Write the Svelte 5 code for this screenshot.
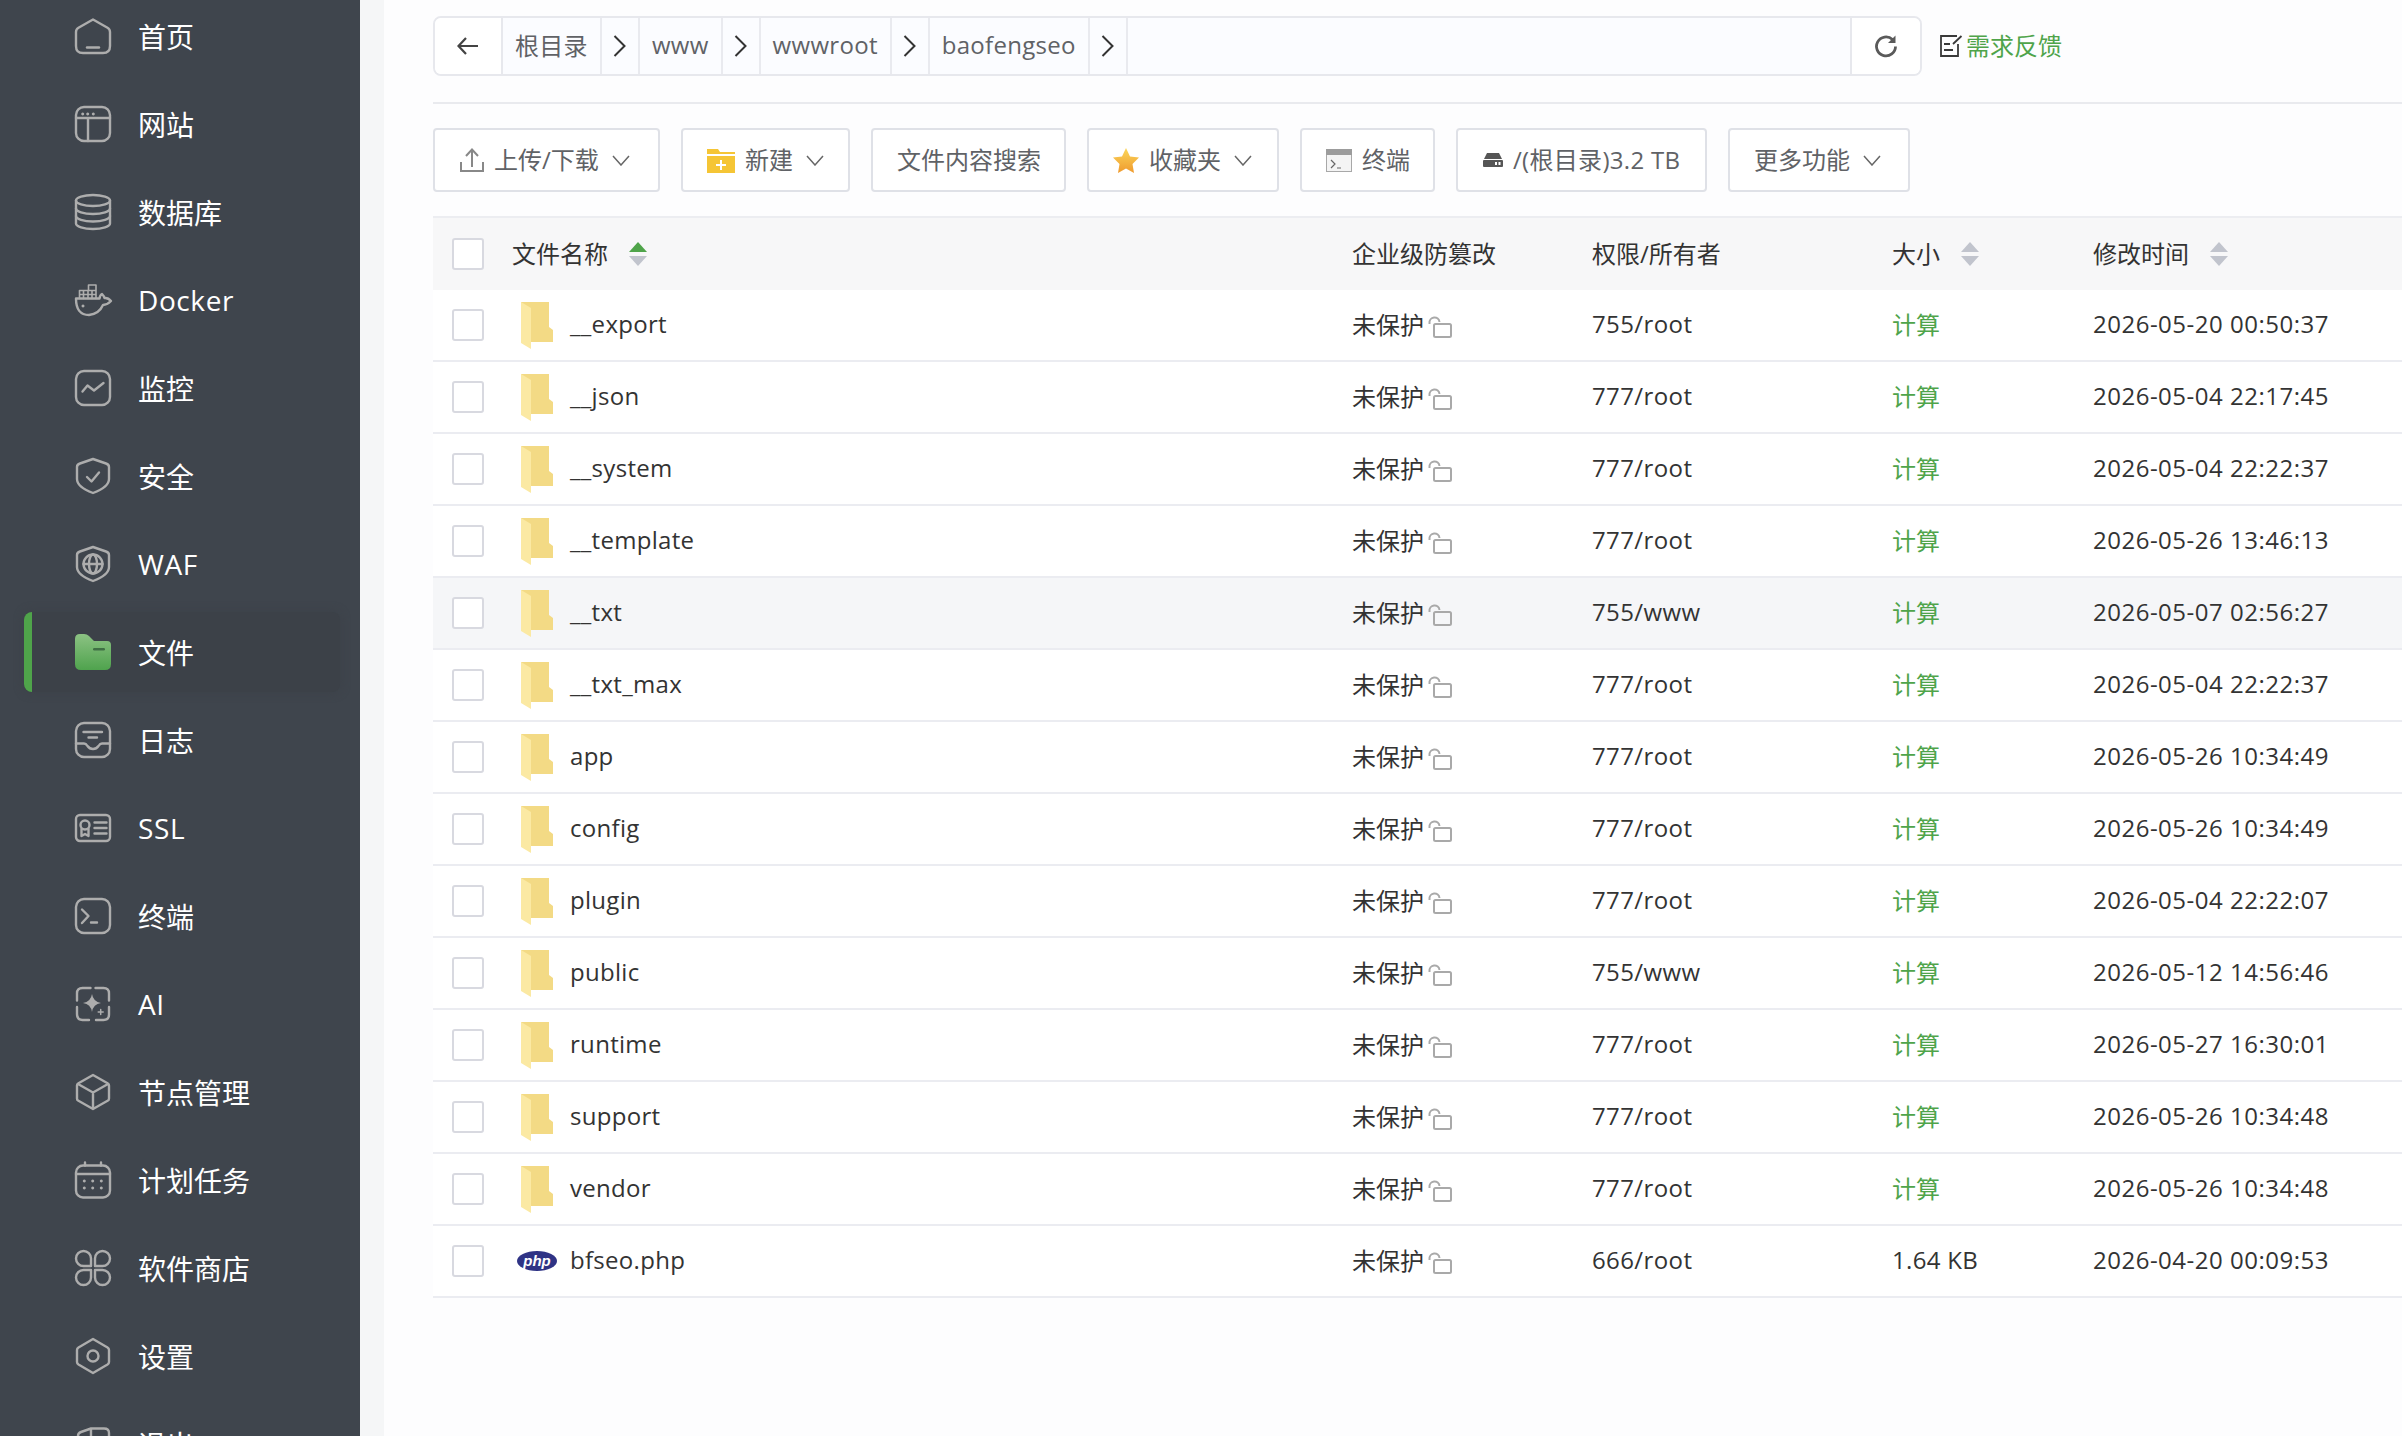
<script>
  const navItems = [
    { label: "首页", icon: "home" },
    { label: "网站", icon: "site" },
    { label: "数据库", icon: "db" },
    { label: "Docker", icon: "docker", latin: true },
    { label: "监控", icon: "monitor" },
    { label: "安全", icon: "shield" },
    { label: "WAF", icon: "waf", latin: true },
    { label: "文件", icon: "files", active: true },
    { label: "日志", icon: "logs" },
    { label: "SSL", icon: "ssl", latin: true },
    { label: "终端", icon: "term" },
    { label: "AI", icon: "ai", latin: true },
    { label: "节点管理", icon: "node" },
    { label: "计划任务", icon: "cron" },
    { label: "软件商店", icon: "store" },
    { label: "设置", icon: "gear" },
    { label: "退出", icon: "exit" }
  ];

  const icons = {
    home: `<path d="M18 1.5 32.5 9.8Q35 11.3 35 14V28Q35 35 28 35H8Q1 35 1 28V14Q1 11.3 3.500 9.800Z"/><path d="M12 29.500H24"/>`,
    site: `<rect x="1" y="1" width="34" height="34" rx="8"/><path d="M1 12H35M13 12V35"/><path class="solid" d="M7.700 6.500a1.500 1.500 0 1 0 .01 0ZM12.700 6.500a1.500 1.500 0 1 0 .01 0ZM18.300 6.500a1.500 1.500 0 1 0 .01 0Z"/>`,
    db: `<ellipse cx="18" cy="6.500" rx="17" ry="5.500"/><path d="M1 6.500V29.500C1 32.500 8.600 35 18 35S35 32.500 35 29.500V6.500"/><path d="M1 14.500C1 17.500 8.600 20 18 20S35 17.500 35 14.500M1 22C1 25 8.600 27.500 18 27.500S35 25 35 22"/>`,
    docker: `<path d="M1 16.500H24.500Q25 13 27 12Q29 14 29.500 16Q33 15.500 36 19Q32 23 28 23Q24 32 14 33Q1 33 1 16.500Z"/><path stroke-width="1.600" d="M13.500 8.500V3H21V16.500M4.500 16.500V8.500H21M8.500 8.500V16.500M13 8.500V16.500M17 8.500V16.500M4.500 12.500H21"/><path class="solid" d="M8 22.500a1.500 1.500 0 1 0 .01 0Z"/>`,
    monitor: `<rect x="1" y="1" width="34" height="34" rx="8"/><path d="M7.500 21.500 12.500 15.500 19 20.500 28.500 13"/>`,
    shield: `<path d="M18 1 31 5.500Q34 6.500 34 9V21Q34 29 18 35Q2 29 2 21V9Q2 6.500 5 5.500Z"/><path d="M12 19 16.500 23.500 24 14.500"/>`,
    waf: `<path d="M18 1 31 5.500Q34 6.500 34 9V21Q34 29 18 35Q2 29 2 21V9Q2 6.500 5 5.500Z"/><circle cx="18" cy="18" r="9.500"/><ellipse cx="18" cy="18" rx="4" ry="9.500"/><path d="M8.500 18H27.500"/>`,
    logs: `<rect x="1" y="1" width="34" height="34" rx="8"/><path d="M8.500 10H27M13.500 15.500H22M1 21.500H9Q11 21.500 12.500 24Q14.500 27 18 27T23.500 24Q25 21.500 27 21.500H35"/>`,
    ssl: `<rect x="1" y="5" width="34" height="26" rx="4"/><circle cx="10" cy="15" r="4.500"/><path d="M6.500 19V26L10 24 13.500 26V19M19.500 12.500H31.500M19.500 18H31.500M19.500 23.500H31.500"/>`,
    term: `<rect x="1" y="1" width="34" height="34" rx="8"/><path d="M7 11.500 13.500 18 7 25M16 24.500H22"/>`,
    ai: `<path d="M15.500 2H7.500Q2 2 2 7.500V14.500M2 21V28Q2 34 7.500 34H14M21 34H28.500Q34 34 34 28.500V21M34 14.500V7.500Q34 2 28.500 2H20.500"/><path class="solid" d="M17 8Q18.200 15.800 26 17Q18.200 18.200 17 26Q15.800 18.200 8 17Q15.800 15.800 17 8Z"/><path stroke-width="1.500" d="M25.700 23.500V28.500M23.200 26H28.200"/>`,
    node: `<path d="M18 1 33 9.500Q34 10 34 11.500V24.500Q34 26 33 26.500L18 35 3 26.500Q2 26 2 24.500V11.500Q2 10 3 9.500ZM3 10 18 18.500 33 10M18 18.500V35"/>`,
    cron: `<rect x="1" y="3.500" width="34" height="32" rx="7"/><path d="M1 12H35M10 .5V3.500M26 .5V3.500"/><path class="solid" d="M9.300 17.500a1.500 1.500 0 1 0 .01 0ZM17.700 17.500a1.500 1.500 0 1 0 .01 0ZM26.300 17.500a1.500 1.500 0 1 0 .01 0ZM9.300 24.500a1.500 1.500 0 1 0 .01 0ZM17.700 24.500a1.500 1.500 0 1 0 .01 0ZM26.300 24.500a1.500 1.500 0 1 0 .01 0Z"/>`,
    store: `<path d="M8.500 1A7.500 7.500 0 0 1 16 8.500V16H8.500A7.500 7.500 0 0 1 8.500 1ZM27.500 1A7.500 7.500 0 0 1 27.500 16H20V8.500A7.500 7.500 0 0 1 27.500 1ZM8.500 35A7.500 7.500 0 0 1 8.500 20H16V27.500A7.500 7.500 0 0 1 8.500 35ZM27.500 35A7.500 7.500 0 0 0 27.500 20H20V27.500A7.500 7.500 0 0 0 27.500 35Z"/>`,
    gear: `<path d="M18 1 32.500 9.500Q34 10.500 34 12V24Q34 25.500 32.500 26.500L18 35 3.500 26.500Q2 25.500 2 24V12Q2 10.500 3.500 9.500Z"/><circle cx="18" cy="18" r="5.500"/>`,
    exit: `<path d="M3 40V10Q3 7 6 6L16 2.500H29Q34 2.500 34 7V40M16 2.500V40"/>`
  };

  const rows = [
    { name: "__export", perm: "755/root", time: "2026-05-20 00:50:37" },
    { name: "__json", perm: "777/root", time: "2026-05-04 22:17:45" },
    { name: "__system", perm: "777/root", time: "2026-05-04 22:22:37" },
    { name: "__template", perm: "777/root", time: "2026-05-26 13:46:13" },
    { name: "__txt", perm: "755/www", time: "2026-05-07 02:56:27", hover: true },
    { name: "__txt_max", perm: "777/root", time: "2026-05-04 22:22:37" },
    { name: "app", perm: "777/root", time: "2026-05-26 10:34:49" },
    { name: "config", perm: "777/root", time: "2026-05-26 10:34:49" },
    { name: "plugin", perm: "777/root", time: "2026-05-04 22:22:07" },
    { name: "public", perm: "755/www", time: "2026-05-12 14:56:46" },
    { name: "runtime", perm: "777/root", time: "2026-05-27 16:30:01" },
    { name: "support", perm: "777/root", time: "2026-05-26 10:34:48" },
    { name: "vendor", perm: "777/root", time: "2026-05-26 10:34:48" },
    { name: "bfseo.php", perm: "666/root", size: "1.64 KB", time: "2026-04-20 00:09:53", php: true }
  ];

  const crumbs = ["根目录", "www", "wwwroot", "baofengseo"];
</script>

{#snippet caret()}
  <svg class="caret" viewBox="0 0 18 11" width="18" height="11"><path d="M1 1 9 10 17 1" /></svg>
{/snippet}

{#snippet sorter(active)}
  <svg class="sorter" viewBox="0 0 18 24" width="18" height="24">
    <path class:on={active} d="M9 0 18 10H0Z" />
    <path d="M0 14H18L9 24Z" />
  </svg>
{/snippet}

<div class="app">
  <aside class="sidebar">
    <ul class="nav">
      {#each navItems as item}
        <li class="nav-item" class:active={item.active}>
          {#if item.active}
            <svg class="nav-icon" viewBox="0 0 36 36" width="36" height="36">
              <defs>
                <linearGradient id="filesGrad" x1="0" y1="0" x2="0" y2="1">
                  <stop offset="0" stop-color="#8cc283" />
                  <stop offset="1" stop-color="#4fa34d" />
                </linearGradient>
              </defs>
              <path fill="url(#filesGrad)" stroke="none" d="M0 5Q0 0 5 0H9Q12 0 14 2L19 7H32Q36 7 36 11V30Q36 36 30 36H6Q0 36 0 30Z" />
              <rect x="18" y="14" width="12" height="2.500" rx="1.200" fill="#3f6f44" stroke="none" />
            </svg>
          {:else}
            <svg class="nav-icon" viewBox="0 0 36 36" width="36" height="36">{@html icons[item.icon]}</svg>
          {/if}
          <span class="nav-label" class:latin={item.latin}>{item.label}</span>
        </li>
      {/each}
    </ul>
  </aside>

  <main class="content">
    <div class="panel">
      <div class="pathbar">
        <div class="path">
          <button class="back" aria-label="返回">
            <svg viewBox="0 0 22 18" width="22" height="18"><path d="M21 9H2M9 1 1.500 9 9 17" /></svg>
          </button>
          {#each crumbs as c}
            <span class="crumb">{c}</span>
            <span class="sep">
              <svg viewBox="0 0 13 22" width="13" height="22"><path d="M1.500 1 11.500 11 1.500 21" /></svg>
            </span>
          {/each}
          <span class="path-fill"></span>
          <button class="refresh" aria-label="刷新">
            <svg viewBox="0 0 24 24" width="24" height="24"><path d="M18.500 5.500A9.500 9.500 0 1 0 21.500 12.500" /><path class="tip" d="M21.500 1.500V9H14Z" /></svg>
          </button>
        </div>
        <span class="feedback">
          <svg viewBox="0 0 23 22" width="23" height="22"><path d="M17 1H1V21H18V9M4 9H10M4 15H13M13 9 21.500 1" /></svg>
          <span class="t">需求反馈</span>
        </span>
      </div>

      <div class="toolbar">
        <button class="tool w-upload">
          <svg class="ic-upload" viewBox="0 0 24 24" width="24" height="24"><path d="M12 19V2M6 8 12 1.500 18 8M1 14V23H23V14" /></svg>
          <span class="t">上传/下载</span> {@render caret()}
        </button>
        <button class="tool w-new">
          <svg viewBox="0 0 28 25" width="28" height="25">
            <path fill="#f5c535" d="M0 1H11L13 4H28V25H0Z" />
            <path fill="none" stroke="#fff" stroke-width="2" d="M0 7H28M14 12V22M9 17H19" />
          </svg>
          <span class="t">新建</span> {@render caret()}
        </button>
        <button class="tool w-search"><span class="t">文件内容搜索</span></button>
        <button class="tool w-fav">
          <svg viewBox="0 0 26 25" width="26" height="25">
            <defs>
              <linearGradient id="starGrad" x1="0" y1="0" x2="0" y2="1">
                <stop offset="0" stop-color="#fbd65a" />
                <stop offset="1" stop-color="#ef9a2e" />
              </linearGradient>
            </defs>
            <path fill="url(#starGrad)" d="M13 0 17 8.500 26 9.500 19.500 16 21 25 13 20.500 5 25 6.500 16 0 9.500 9 8.500Z" />
          </svg>
          <span class="t">收藏夹</span> {@render caret()}
        </button>
        <button class="tool w-term">
          <svg viewBox="0 0 26 23" width="26" height="23">
            <rect x=".5" y=".5" width="25" height="22" fill="#f4f4f4" stroke="#a8a8a8" />
            <rect width="26" height="6" fill="#9c9c9c" />
            <path fill="none" stroke="#666" stroke-width="1.200" d="M5 11 9 15 5 19M11 19H15" />
          </svg>
          <span class="t">终端</span>
        </button>
        <button class="tool w-disk">
          <svg viewBox="0 0 20 14" width="20" height="14">
            <path fill="#555" d="M4 0H16L19 6H1Z" />
            <rect y="7" width="20" height="7" rx="1" fill="#555" />
            <rect x="12" y="9" width="2" height="3" fill="#fff" />
            <rect x="15.500" y="9" width="2" height="3" fill="#fff" />
          </svg>
          <span class="t spaced">/(根目录)3.2 TB</span>
        </button>
        <button class="tool w-more"><span class="t">更多功能</span> {@render caret()}</button>
      </div>

      <div class="table">
        <div class="thead row-grid">
          <span class="check-cell"><span class="check"></span></span>
          <span class="th"><span class="t">文件名称</span> {@render sorter(true)}</span>
          <span class="th"><span class="t">企业级防篡改</span></span>
          <span class="th"><span class="t">权限/所有者</span></span>
          <span class="th"><span class="t">大小</span> {@render sorter(false)}</span>
          <span class="th"><span class="t">修改时间</span> {@render sorter(false)}</span>
        </div>

        {#each rows as row}
          <div class="row row-grid" class:hover={row.hover}>
            <span class="check-cell"><span class="check"></span></span>
            <span class="name">
              <span class="file-icon">
                {#if row.php}
                  <svg viewBox="0 0 40 20" width="40" height="20">
                    <ellipse cx="20" cy="10" rx="20" ry="10" fill="#2f3385" />
                    <text x="20" y="15" text-anchor="middle" class="php-text">php</text>
                  </svg>
                {:else}
                  <svg viewBox="0 0 32 47" width="32" height="47">
                    <path fill="#f3da85" d="M0 0H28V25L32 28V40H10Z" />
                    <path fill="#fbe9a3" d="M0 0 10 6V47L0 41Z" />
                  </svg>
                {/if}
              </span>
              <span class="t spaced">{row.name}</span>
            </span>
            <span class="guard">
              <span class="t">未保护</span>
              <svg viewBox="0 0 24 22" width="24" height="22"><rect x="6" y="8" width="17" height="13" rx="1.500" /><path d="M1.500 8V7A5 5 0 0 1 11.500 6" /></svg>
            </span>
            <span class="t perm">{row.perm}</span>
            {#if row.size}
              <span class="t spaced">{row.size}</span>
            {:else}
              <span class="t calc">计算</span>
            {/if}
            <span class="t time">{row.time}</span>
          </div>
        {/each}
      </div>
    </div>
  </main>
</div>

<style>
  :global(body) { margin: 0; background: #f5f6f7; }

  .app {
    display: flex;
    width: 2402px;
    height: 1436px;
    overflow: hidden;
    font-family: "Open Sans", "Noto Sans CJK SC", sans-serif;
    font-size: 24px;
    color: #333;
  }

  .t { padding-bottom: 3px; }
  .spaced { letter-spacing: 0.3px; }

  .sidebar { width: 360px; flex-shrink: 0; background: #3f454d; overflow: hidden; }
  .nav { list-style: none; margin: -8px 0 0; padding: 0; }
  .nav-item {
    position: relative;
    display: flex;
    align-items: center;
    gap: 27px;
    height: 88px;
    padding-left: 75px;
    font-size: 28px;
    color: #fff;
  }
  .nav-item.active::before {
    content: "";
    position: absolute;
    left: 24px;
    top: 4px;
    bottom: 4px;
    width: 316px;
    background: #3c4148;
    border-radius: 8px;
    box-shadow: 0 0 8px 1px #3d4249;
  }
  .nav-item.active::after {
    content: "";
    position: absolute;
    left: 24px;
    top: 4px;
    bottom: 4px;
    width: 8px;
    background: #4fa44a;
    border-radius: 8px 0 0 8px;
  }
  .nav-label, .nav-icon { position: relative; z-index: 1; }
  .nav-label { padding-bottom: 1px; }
  .nav-label.latin { letter-spacing: 0.6px; }
  .nav-icon { flex-shrink: 0; fill: none; stroke: #adadad; stroke-width: 2.400; overflow: visible; stroke-linecap: round; stroke-linejoin: round; }
  .nav-icon :global(.solid) { fill: #adadad; stroke: none; }

  .content { flex: 1; padding-left: 24px; min-width: 0; }
  .panel { height: 100%; background: #fdfdfe; padding-left: 49px; }

  .pathbar {
    display: flex;
    align-items: center;
    gap: 18px;
    height: 104px;
    padding-top: 16px;
    padding-bottom: 26px;
    box-sizing: border-box;
    border-bottom: 2px solid #e9eaee;
  }
  .path {
    display: flex;
    width: 1489px;
    height: 60px;
    box-sizing: border-box;
    border: 2px solid #e7e8ed;
    border-radius: 8px;
    overflow: hidden;
    background: #fbfcff;
  }
  .back, .refresh { border: 0; padding: 0; background: #fff; display: flex; align-items: center; justify-content: center; }
  .back { width: 68px; border-right: 2px solid #e7e8ed; }
  .back svg { fill: none; stroke: #444; stroke-width: 2.200; }
  .refresh { width: 70px; border-left: 2px solid #e7e8ed; }
  .refresh svg { fill: none; stroke: #5a5a5a; stroke-width: 2.800; }
  .refresh .tip { fill: #5a5a5a; stroke: none; }
  .crumb, .sep {
    display: flex;
    align-items: center;
    justify-content: center;
    border-right: 2px solid #e9eaef;
    color: #606266;
    white-space: nowrap;
  }
  .crumb { padding: 0 12px 3px; letter-spacing: 0.3px; }
  .sep { width: 36px; flex-shrink: 0; }
  .sep svg { fill: none; stroke: #333; stroke-width: 2; }
  .path-fill { flex: 1; }
  .feedback { display: flex; align-items: center; gap: 3px; color: #4fa44a; white-space: nowrap; }
  .feedback svg { fill: none; stroke: #3a3a3a; stroke-width: 1.800; }

  .toolbar { display: flex; gap: 21px; padding: 24px 0; }
  .tool {
    display: flex;
    align-items: center;
    gap: 10px;
    height: 64px;
    box-sizing: border-box;
    padding: 0 0 0 24px;
    border: 2px solid #dfe1e7;
    border-radius: 4px;
    background: #fff;
    color: #606266;
    font: inherit;
    white-space: nowrap;
  }
  .w-upload { width: 227px; padding-left: 25px; }
  .w-new { width: 169px; }
  .w-search { width: 195px; }
  .w-fav { width: 192px; }
  .w-term { width: 135px; }
  .w-disk { width: 251px; padding-left: 25px; }
  .w-more { width: 182px; }
  .ic-upload { fill: none; stroke: #888; stroke-width: 2; }
  .caret { fill: none; stroke: #666; stroke-width: 1.500; margin-left: 3px; }

  .row-grid { display: grid; grid-template-columns: 79px 840px 240px 300px 201px 1fr; align-items: center; }
  .thead { height: 74px; box-sizing: border-box; background: #f7f7f8; border-top: 2px solid #ecedf1; }
  .th { display: flex; align-items: center; gap: 21px; white-space: nowrap; }
  .sorter { fill: #c1c4cd; }
  .sorter .on { fill: #4fa44a; }

  .row { height: 72px; box-sizing: border-box; background: #fff; border-bottom: 2px solid #ebecf1; }
  .row.hover { background: #f5f6f8; }
  .check-cell { display: flex; padding-left: 19px; }
  .check { width: 32px; height: 32px; box-sizing: border-box; border: 2px solid #d8d9e0; border-radius: 3px; background: #fff; }
  .name { display: flex; align-items: center; gap: 8px; }
  .file-icon { display: flex; justify-content: center; width: 50px; }
  .php-text { fill: #fff; font: italic bold 15px "Liberation Sans", sans-serif; }
  .guard { display: flex; align-items: center; gap: 4px; }
  .guard svg { fill: none; stroke: #a9a9a9; stroke-width: 2; margin-top: 4px; }
  .perm { letter-spacing: 0.4px; }
  .calc { color: #4fa44a; }
  .time { letter-spacing: 0.5px; white-space: nowrap; }
</style>
